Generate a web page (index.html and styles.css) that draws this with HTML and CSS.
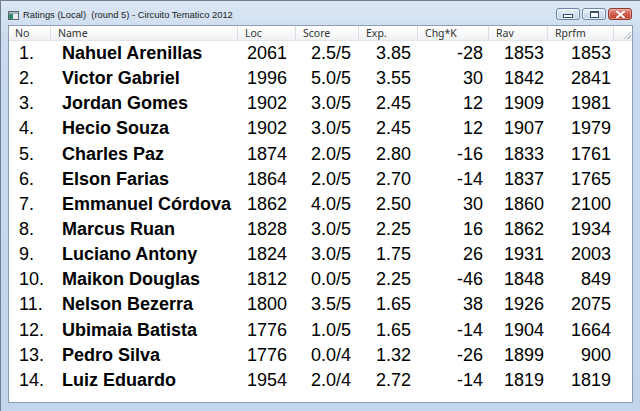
FILE: index.html
```html
<!DOCTYPE html>
<html>
<head>
<meta charset="utf-8">
<link rel="stylesheet" href="styles.css">
</head>
<body>
<div class="window">
  <div class="titlebar">
    <svg class="appicon" width="11" height="9" viewBox="0 0 11 9">
      <rect x="0.5" y="0.5" width="10" height="8" fill="#e8ecef" stroke="#5d6a70"/>
      <rect x="1" y="1" width="9" height="2" fill="#9fb4bd"/>
      <rect x="1" y="3" width="4" height="5" fill="#2f8a6e"/>
    </svg>
    <span class="title">Ratings (Local)&nbsp; (round 5) - Circuito Tematico 2012</span>
    <div class="buttons">
      <div class="btn"><span class="glyph-min"></span></div>
      <div class="btn"><span class="glyph-max"></span></div>
      <div class="btn close">
        <svg width="9" height="7" viewBox="0 0 9 7"><path d="M1 0.5 L8 6.5 M8 0.5 L1 6.5" stroke="#fff" stroke-width="2" stroke-linecap="square"/></svg>
      </div>
    </div>
  </div>
  <div class="client">
    <div class="grid header">
      <div class="hc c-no">No</div>
      <div class="hc">Name</div>
      <div class="hc">Loc</div>
      <div class="hc">Score</div>
      <div class="hc">Exp.</div>
      <div class="hc">Chg*K</div>
      <div class="hc">Rav</div>
      <div class="hc">Rprfm</div>
      <div class="hc last"><span class="grip"></span></div>
    </div>
    <div class="rows">
      <div class="grid row"><span class="d-no">1.</span><span class="d-name">Nahuel Arenillas</span><span class="d-loc">2061</span><span class="d-score">2.5/5</span><span class="d-exp">3.85</span><span class="d-chg">-28</span><span class="d-rav">1853</span><span class="d-rp">1853</span></div>
      <div class="grid row"><span class="d-no">2.</span><span class="d-name">Victor Gabriel</span><span class="d-loc">1996</span><span class="d-score">5.0/5</span><span class="d-exp">3.55</span><span class="d-chg">30</span><span class="d-rav">1842</span><span class="d-rp">2841</span></div>
      <div class="grid row"><span class="d-no">3.</span><span class="d-name">Jordan Gomes</span><span class="d-loc">1902</span><span class="d-score">3.0/5</span><span class="d-exp">2.45</span><span class="d-chg">12</span><span class="d-rav">1909</span><span class="d-rp">1981</span></div>
      <div class="grid row"><span class="d-no">4.</span><span class="d-name">Hecio Souza</span><span class="d-loc">1902</span><span class="d-score">3.0/5</span><span class="d-exp">2.45</span><span class="d-chg">12</span><span class="d-rav">1907</span><span class="d-rp">1979</span></div>
      <div class="grid row"><span class="d-no">5.</span><span class="d-name">Charles Paz</span><span class="d-loc">1874</span><span class="d-score">2.0/5</span><span class="d-exp">2.80</span><span class="d-chg">-16</span><span class="d-rav">1833</span><span class="d-rp">1761</span></div>
      <div class="grid row"><span class="d-no">6.</span><span class="d-name">Elson Farias</span><span class="d-loc">1864</span><span class="d-score">2.0/5</span><span class="d-exp">2.70</span><span class="d-chg">-14</span><span class="d-rav">1837</span><span class="d-rp">1765</span></div>
      <div class="grid row"><span class="d-no">7.</span><span class="d-name">Emmanuel Córdova</span><span class="d-loc">1862</span><span class="d-score">4.0/5</span><span class="d-exp">2.50</span><span class="d-chg">30</span><span class="d-rav">1860</span><span class="d-rp">2100</span></div>
      <div class="grid row"><span class="d-no">8.</span><span class="d-name">Marcus Ruan</span><span class="d-loc">1828</span><span class="d-score">3.0/5</span><span class="d-exp">2.25</span><span class="d-chg">16</span><span class="d-rav">1862</span><span class="d-rp">1934</span></div>
      <div class="grid row"><span class="d-no">9.</span><span class="d-name">Luciano Antony</span><span class="d-loc">1824</span><span class="d-score">3.0/5</span><span class="d-exp">1.75</span><span class="d-chg">26</span><span class="d-rav">1931</span><span class="d-rp">2003</span></div>
      <div class="grid row"><span class="d-no">10.</span><span class="d-name">Maikon Douglas</span><span class="d-loc">1812</span><span class="d-score">0.0/5</span><span class="d-exp">2.25</span><span class="d-chg">-46</span><span class="d-rav">1848</span><span class="d-rp">849</span></div>
      <div class="grid row"><span class="d-no">11.</span><span class="d-name">Nelson Bezerra</span><span class="d-loc">1800</span><span class="d-score">3.5/5</span><span class="d-exp">1.65</span><span class="d-chg">38</span><span class="d-rav">1926</span><span class="d-rp">2075</span></div>
      <div class="grid row"><span class="d-no">12.</span><span class="d-name">Ubimaia Batista</span><span class="d-loc">1776</span><span class="d-score">1.0/5</span><span class="d-exp">1.65</span><span class="d-chg">-14</span><span class="d-rav">1904</span><span class="d-rp">1664</span></div>
      <div class="grid row"><span class="d-no">13.</span><span class="d-name">Pedro Silva</span><span class="d-loc">1776</span><span class="d-score">0.0/4</span><span class="d-exp">1.32</span><span class="d-chg">-26</span><span class="d-rav">1899</span><span class="d-rp">900</span></div>
      <div class="grid row"><span class="d-no">14.</span><span class="d-name">Luiz Eduardo</span><span class="d-loc">1954</span><span class="d-score">2.0/4</span><span class="d-exp">2.72</span><span class="d-chg">-14</span><span class="d-rav">1819</span><span class="d-rp">1819</span></div>
    </div>
  </div>
</div>
</body>
</html>
```
FILE: styles.css
```css
html, body { margin: 0; padding: 0; }
body { width: 640px; height: 411px; overflow: hidden; background: #c8d9ed; }

.window {
  box-sizing: border-box;
  width: 640px;
  height: 411px;
  border-top: 1px solid #6f7f92;
  border-left: 1px solid #6f7f92;
  background: linear-gradient(#dce7f4, #c9daee 40px, #c3d5eb);
  display: flex;
  flex-direction: column;
  padding: 0 7px 8px 7px;
}

.titlebar {
  height: 24px;
  display: flex;
  align-items: center;
  position: relative;
}
.appicon { margin-left: 0; margin-top: 4px; flex: none; }
.title {
  margin-left: 4px;
  margin-top: 3px;
  font-family: "Liberation Sans", Arial, sans-serif;
  font-size: 9.4px;
  color: #222;
  white-space: nowrap;
}
.buttons {
  margin-left: auto;
  margin-right: 1px;
  margin-top: 2px;
  display: flex;
  gap: 2px;
}
.btn {
  box-sizing: border-box;
  width: 24px;
  height: 12px;
  border: 1px solid #6c87a8;
  border-radius: 3px;
  background: linear-gradient(#eef3fa, #d3e0ef 50%, #bfd1e8);
  display: flex;
  align-items: center;
  justify-content: center;
  box-shadow: inset 0 0 0 1px rgba(255,255,255,0.6);
}
.btn.close {
  width: 24px;
  border-color: #8d3b31;
  background: linear-gradient(#e59a8e, #cf5e4e 50%, #b9402f);
  box-shadow: inset 0 0 0 1px rgba(255,200,190,0.5);
}
.glyph-min {
  width: 8px;
  height: 2px;
  margin-top: 4px;
  background: #fff;
  border: 1px solid #3c4f68;
}
.glyph-max {
  box-sizing: border-box;
  width: 9px;
  height: 7px;
  border: 1px solid #3c4f68;
  border-top-width: 2px;
  background: #fff;
  box-shadow: inset 0 0 0 1px #fff;
}

.client {
  flex: 1;
  background: #fff;
  border: 1px solid #8c9db2;
  display: flex;
  flex-direction: column;
}

.grid {
  display: grid;
  grid-template-columns: 42px 187px 58px 63px 59px 71px 59px 66px 1fr;
}

.header {
  height: 15px;
  box-sizing: border-box;
  background: linear-gradient(#ffffff, #f7f8f9 60%, #f0f1f3);
  border-bottom: 1px solid #e2e4e7;
}
.hc {
  box-sizing: border-box;
  border-right: 1px solid #dcdfe3;
  padding-left: 7px;
  font-family: "Noto Sans", sans-serif;
  font-size: 10.5px;
  line-height: 14px;
  color: #333;
  white-space: nowrap;
}
.hc.c-no { padding-left: 6px; }
.hc.last { border-right: none; position: relative; }
.grip {
  position: absolute;
  right: 1px;
  bottom: 1px;
  width: 7px;
  height: 7px;
  background: linear-gradient(135deg, transparent 45%, #b8bcc2 45%, #b8bcc2 55%, transparent 55%, transparent 70%, #b8bcc2 70%, #b8bcc2 80%, transparent 80%);
}

.rows { padding-top: 0; }
.row {
  height: 25.15px;
  align-items: center;
  font-family: "Liberation Sans", Arial, sans-serif;
  font-size: 18px;
  color: #000;
  white-space: nowrap;
}
.row span { display: block; line-height: 25px; }
.d-no { padding-left: 10px; }
.d-name { padding-left: 11px; font-weight: bold; }
.d-loc { text-align: right; padding-right: 9px; }
.d-score { text-align: right; padding-right: 8px; }
.d-exp { text-align: right; padding-right: 7px; }
.d-chg { text-align: right; padding-right: 6px; }
.d-rav { text-align: right; padding-right: 4px; }
.d-rp { text-align: right; padding-right: 3px; }
```
